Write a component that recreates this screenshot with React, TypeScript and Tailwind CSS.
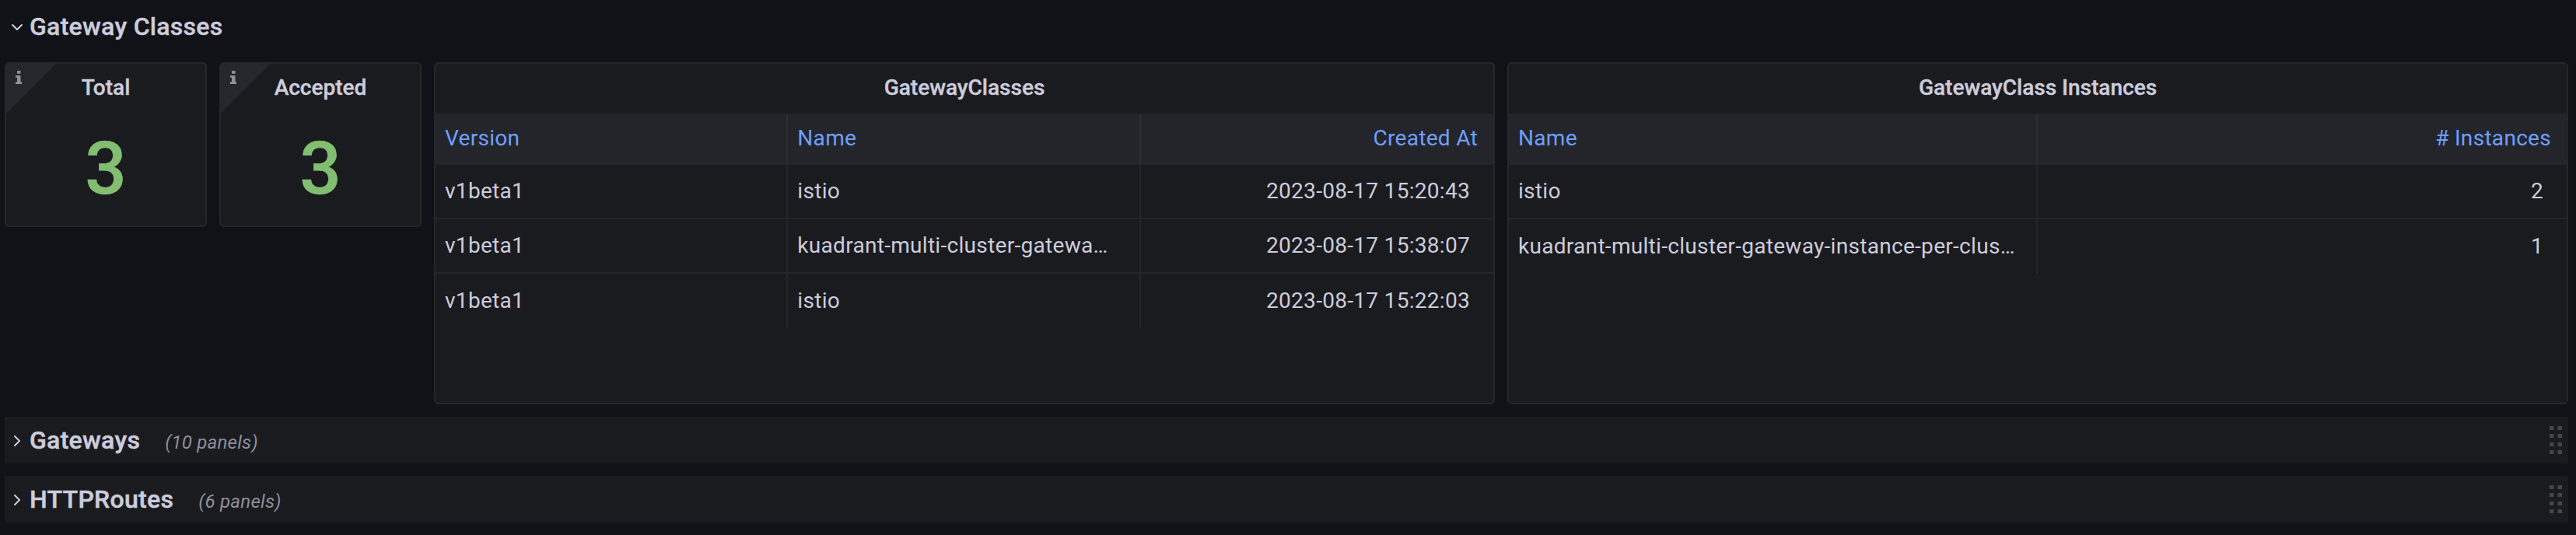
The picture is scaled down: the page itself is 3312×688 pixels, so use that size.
import type { ReactNode } from "react";

type Column = { label: string; align?: "right" };

function InfoCorner() {
  return (
    <div className="absolute left-0 top-0">
      <svg width="64" height="64" viewBox="0 0 64 64" className="block">
        <path d="M0 0H64L0 64Z" fill="#24272b" />
        <path
          d="M14 9h4.500v3.800h-4.500zM12 15h6.500v8.300h1.500v2.700h-8v-2.700h2v-5.600h-2z"
          fill="#8f9198"
        />
      </svg>
    </div>
  );
}

function Panel({ title, className, children, info }: { title: string; className: string; children: ReactNode; info?: boolean }) {
  return (
    <section className={`relative flex flex-col overflow-hidden rounded-[6px] border-2 border-[#25272b] bg-[#1a1b1f] ${className}`}>
      {info && <InfoCorner />}
      <h2 className="flex h-16 shrink-0 items-center justify-center pb-[2px] text-[28px] font-medium leading-[42px] tracking-normal [-webkit-text-stroke:0.4px_#ccccdc]">{title}</h2>
      {children}
    </section>
  );
}

function Stat({ title, value }: { title: string; value: string }) {
  return (
    <Panel title={title} className="h-[212px] w-[260px]" info>
      <div className="flex flex-1 items-center justify-center pb-[2px] text-[94px] font-medium leading-none tracking-normal text-[#83bd71] [-webkit-text-stroke:0.6px_#83bd71]">{value}</div>
    </Panel>
  );
}

function Table({ columns, rows, grid }: { columns: Column[]; rows: string[][]; grid: string }) {
  return (
    <div className="flex flex-col">
      <div className={`grid h-[66px] bg-[#24252a] text-[#6e9fff] ${grid}`}>
        {columns.map((c, i) => (
          <div
            key={c.label}
            className={`flex items-center pb-[2px] pl-3 ${c.align ? "justify-end pr-5" : ""} ${i < columns.length - 1 ? "border-r-2 border-[#2d2e33]" : ""}`}
          >
            {c.label}
          </div>
        ))}
      </div>
      {rows.map((row, r) => (
        <div key={r} className={`grid h-[70px] ${grid}`}>
          {row.map((cell, i) => (
            <div
              key={i}
              className={`flex items-center whitespace-nowrap border-[#25262a] pl-3 ${columns[i].align ? "justify-end pr-[30px]" : ""} ${i < row.length - 1 ? "border-r-2" : ""} ${r < rows.length - 1 ? "border-b-2" : ""}`}
            >
              {cell}
            </div>
          ))}
        </div>
      ))}
    </div>
  );
}

function CollapsedRow({ title, count }: { title: string; count: string }) {
  return (
    <div className="flex h-[60px] items-center bg-[#1a1b1f] pl-3 pr-2">
      <svg width="16" height="16" viewBox="0 0 16 16" fill="none" stroke="#ccccdc" strokeWidth="2" strokeLinecap="round" strokeLinejoin="round">
        <path d="M1 3L7 9L1 15" />
      </svg>
      <h2 className="ml-1 text-[32px] font-medium leading-[44px] [-webkit-text-stroke:0.5px_#ccccdc]">{title}</h2>
      <span className="ml-[32px] pt-1.5 text-[24px] italic tracking-[0.26px] text-[#8e8f9a]">{count}</span>
      <div className="ml-auto grid grid-cols-2 gap-x-[6px] gap-y-[5.667px]">
        {Array.from({ length: 8 }, (_, i) => (
          <i
            key={i}
            className="block h-[5px] w-[5px] bg-[#464646] odd:shadow-[1px_0_0_#2c2c2e] even:shadow-[-1px_0_0_#2c2c2e]"
          />
        ))}
      </div>
    </div>
  );
}

export default function App() {
  return (
    <main className="flex h-[688px] w-[3312px] flex-col overflow-hidden bg-[#111217] pl-[6px] pr-[10px] font-['Roboto',sans-serif] text-[28px] tracking-[0.3px] text-[#ccccdc]">
      <header className="flex h-20 items-start pl-2 pt-3">
        <svg width="16" height="16" viewBox="0 0 16 16" className="mt-4" fill="none" stroke="#ccccdc" strokeWidth="2" strokeLinecap="round" strokeLinejoin="round">
          <path d="M2 4L8 10L14 4" />
        </svg>
        <h1 className="ml-2 text-[32px] font-medium leading-[44px] [-webkit-text-stroke:0.4px_#ccccdc]">Gateway Classes</h1>
      </header>
      <div className="flex h-[440px] items-start gap-4">
        <Stat title="Total" value="3" />
        <Stat title="Accepted" value="3" />
        <Panel title="GatewayClasses" className="h-[440px] w-[1364px]">
          <Table
            grid="grid-cols-3"
            columns={[{ label: "Version" }, { label: "Name" }, { label: "Created At", align: "right" }]}
            rows={[
              ["v1beta1", "istio", "2023-08-17 15:20:43"],
              ["v1beta1", "kuadrant-multi-cluster-gatewa…", "2023-08-17 15:38:07"],
              ["v1beta1", "istio", "2023-08-17 15:22:03"],
            ]}
          />
        </Panel>
        <Panel title="GatewayClass Instances" className="h-[440px] w-[1364px]">
          <Table
            grid="grid-cols-2"
            columns={[{ label: "Name" }, { label: "# Instances", align: "right" }]}
            rows={[
              ["istio", "2"],
              ["kuadrant-multi-cluster-gateway-instance-per-clus…", "1"],
            ]}
          />
        </Panel>
      </div>
      <div className="mt-4 flex flex-col gap-4">
        <CollapsedRow title="Gateways" count="(10 panels)" />
        <CollapsedRow title="HTTPRoutes" count="(6 panels)" />
      </div>
    </main>
  );
}
